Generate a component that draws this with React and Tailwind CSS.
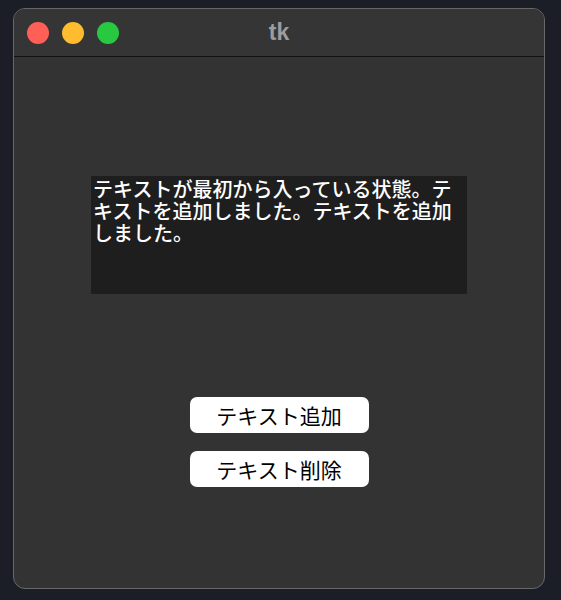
const lines = [
  "テキストが最初から入っている状態。テ",
  "キストを追加しました。テキストを追加",
  "しました。",
];

const buttons = ["テキスト追加", "テキスト削除"];

function TrafficLights() {
  return (
    <div className="flex items-center gap-[13px] pl-[13px]">
      <span className="block w-[22px] h-[22px] rounded-full bg-[#fe5f57]" />
      <span className="block w-[22px] h-[22px] rounded-full bg-[#febc2e]" />
      <span className="block w-[22px] h-[22px] rounded-full bg-[#28c840]" />
    </div>
  );
}

export default function App() {
  return (
    <div
      className="w-[561px] h-[600px] bg-[#1c1e27] pt-[8px] pl-[13px]"
      style={{ fontFamily: '"Noto Sans CJK JP", "Noto Sans", sans-serif' }}
    >
      <div className="w-[532px] h-[581px] rounded-[12px] border border-[#686868] bg-[#333333] overflow-hidden flex flex-col">
        {/* title bar */}
        <div className="relative h-[48px] shrink-0 flex items-center bg-[#353535] border-b border-[#121212]">
          <TrafficLights />
          <div
            className="absolute inset-0 flex items-center justify-center text-[23px] font-bold text-[#9d9d9d]"
            style={{ fontFamily: '"Liberation Sans", Arial, sans-serif' }}
          >
            tk
          </div>
        </div>

        {/* body */}
        <div className="flex-1 flex flex-col items-center pt-[119px]">
          <div className="w-[376px] h-[118px] bg-[#1e1e1e] pt-[2px] pl-[2px] text-white text-[20px] leading-[22px] font-medium">
            {lines.map((l, i) => (
              <div key={i} className="whitespace-nowrap">
                {l}
              </div>
            ))}
          </div>

          <div className="flex flex-col gap-[18px] mt-[103px]">
            {buttons.map((b) => (
              <button
                key={b}
                className="w-[179px] h-[36px] rounded-[7px] bg-white text-black text-[21px] leading-none flex items-center justify-center"
              >
                {b}
              </button>
            ))}
          </div>
        </div>
      </div>
    </div>
  );
}
